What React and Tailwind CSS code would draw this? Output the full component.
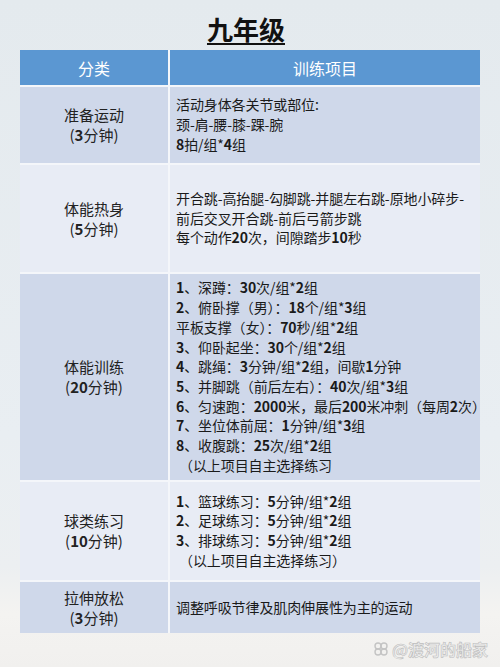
import React from "react";

const rows = [
    {
        name: "准备运动",
        time: "(3分钟)",
        bg: "bg-[#cfd8ea]",
        lines: ["活动身体各关节或部位:", "颈-肩-腰-膝-踝-腕", "8拍/组*4组"]
    },
    {
        name: "体能热身",
        time: "(5分钟)",
        bg: "bg-[#e8ecf5]",
        lines: [
            "开合跳-高抬腿-勾脚跳-并腿左右跳-原地小碎步-",
            "前后交叉开合跳-前后弓箭步跳",
            "每个动作20次，间隙踏步10秒"
        ]
    },
    {
        name: "体能训练",
        time: "(20分钟)",
        bg: "bg-[#cfd8ea]",
        lines: [
            "1、深蹲：30次/组*2组",
            "2、俯卧撑（男）：18个/组*3组",
            "平板支撑（女）：70秒/组*2组",
            "3、仰卧起坐：30个/组*2组",
            "4、跳绳：3分钟/组*2组，间歇1分钟",
            "5、并脚跳（前后左右）：40次/组*3组",
            "6、匀速跑：2000米，最后200米冲刺（每周2次）",
            "7、坐位体前屈：1分钟/组*3组",
            "8、收腹跳：25次/组*2组",
            " （以上项目自主选择练习"
        ]
    },
    {
        name: "球类练习",
        time: "(10分钟)",
        bg: "bg-[#e8ecf5]",
        lines: [
            "1、篮球练习：5分钟/组*2组",
            "2、足球练习：5分钟/组*2组",
            "3、排球练习：5分钟/组*2组",
            " （以上项目自主选择练习）"
        ]
    },
    {
        name: "拉伸放松",
        time: "(3分钟)",
        bg: "bg-[#cfd8ea]",
        lines: ["调整呼吸节律及肌肉伸展性为主的运动"]
    }
];

// digits are set in bold in the poster
const Line = ({ text }) => (
    <div className="whitespace-pre">
        {text.split(/(\d+)/).map((part, i) =>
            /^\d+$/.test(part) ? (
                <span key={i} className="font-bold">
                    {part}
                </span>
            ) : (
                <span key={i}>{part}</span>
            )
        )}
    </div>
);

const App = () => {
    return (
        <div className="relative h-[667px] w-[500px] overflow-hidden bg-[linear-gradient(180deg,#e4eaee_0%,#e9eef2_65%,#eceff1_85%,#f4f3f1_92%,#f1f0ee_100%)] font-['Noto_Sans_CJK_SC','Noto_Sans',sans-serif] text-[#1e1e1e]">
            <div className="flex h-[50px] items-start justify-center pt-[13px]">
                <h1 className="ml-[-8px] text-[26px] font-bold leading-[32px] text-[#111] underline decoration-2 underline-offset-[3px]">
                    九年级
                </h1>
            </div>

            <div className="mx-[20px] grid grid-cols-[148px_310px] grid-rows-[35px_76px_107px_206px_98px_51px] gap-[2px] bg-[#f4f6fa]">
                <div className="flex items-center justify-center bg-[#5b97d2] text-[16px] text-white">
                    分类
                </div>
                <div className="flex items-center justify-center bg-[#5b97d2] text-[16px] text-white">
                    训练项目
                </div>

                {rows.map(row => (
                    <React.Fragment key={row.name}>
                        <div
                            className={`flex flex-col items-center justify-center text-[15px] leading-[20px] text-[#222] ${row.bg}`}
                        >
                            <div>{row.name}</div>
                            <div>
                                <Line text={row.time} />
                            </div>
                        </div>
                        <div
                            className={`flex flex-col justify-center pl-[6px] text-[14px] leading-[19.7px] tracking-[-0.1px] text-[#1a1a1a] ${row.bg}`}
                        >
                            {row.lines.map((l, i) => (
                                <Line key={i} text={l} />
                            ))}
                        </div>
                    </React.Fragment>
                ))}
            </div>

            <div className="mt-[4px] flex items-center justify-end gap-[3px] pr-[12px] text-[16px] text-[#d0d0d0]">
                <svg width="16" height="16" viewBox="0 0 16 16" fill="none" stroke="#c4c4c4" strokeWidth="1.4">
                    <circle cx="5" cy="5" r="3" />
                    <circle cx="11" cy="5" r="3" />
                    <circle cx="5" cy="11" r="3" />
                    <circle cx="11" cy="11" r="3" />
                </svg>
                <span className="font-bold [-webkit-text-stroke:0.6px_#bdbdbd] text-[#eeeeee]">@渡河的船家</span>
            </div>
        </div>
    );
};

export default App;
